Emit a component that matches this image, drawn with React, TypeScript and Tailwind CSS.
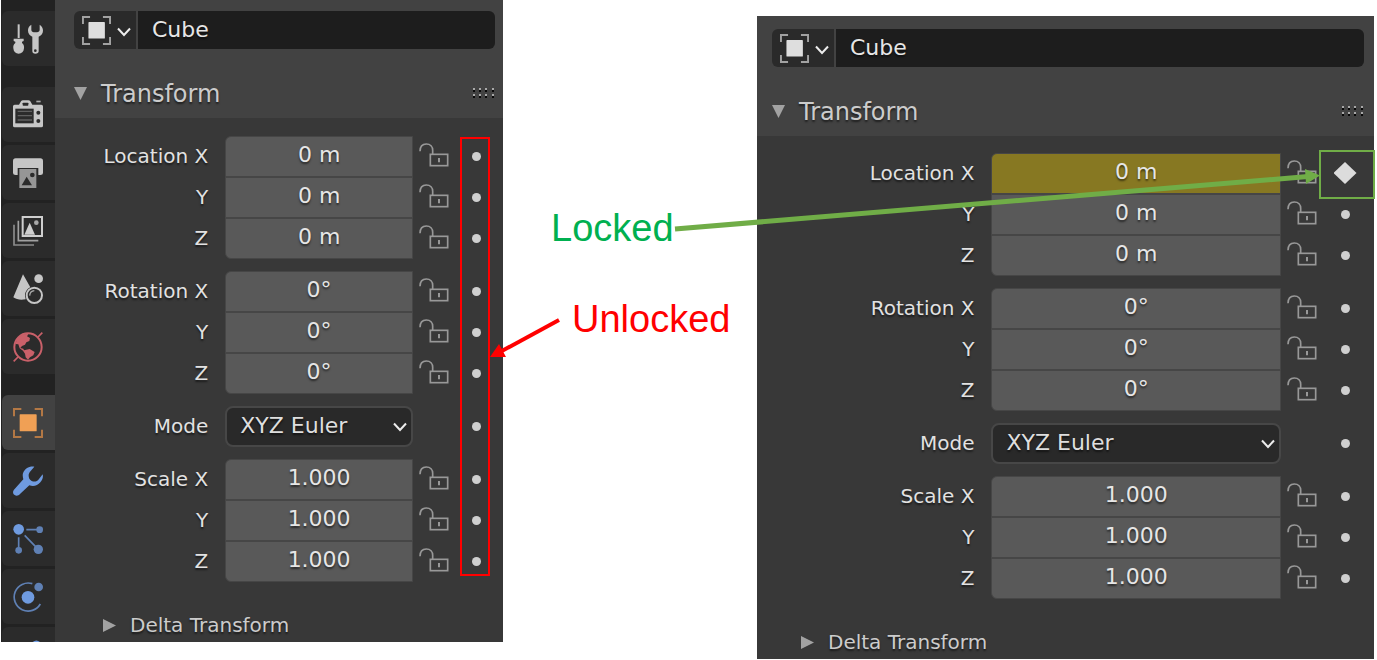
import React, { useState } from "react";

const textShadow = "[text-shadow:0_2px_2px_rgba(0,0,0,0.55)]";

function BracketIcon({ outer, inner, className }: { outer: string; inner: string; className: string }) {
  return (
    <svg viewBox="0 0 90 90" className={className} fill="none" aria-hidden="true">
      <path
        d="M3 25V3H25M65 3H87V25M87 65V87H65M25 87H3V65"
        stroke={outer}
        strokeWidth="6"
      />
      <rect x="20" y="19" width="51" height="51" rx="2" fill={inner} />
    </svg>
  );
}

function Chevron({ className }: { className: string }) {
  return (
    <svg viewBox="0 0 14 10" className={className} fill="none" aria-hidden="true">
      <path d="M1 1.5L7 8L13 1.5" stroke="#ececec" strokeWidth="2" />
    </svg>
  );
}

function LockIcon() {
  return (
    <svg viewBox="0 0 90 72" className="h-6 w-[30px]" fill="none" stroke="#989898" strokeWidth="5" aria-hidden="true">
      <path d="M3 25C3 10 11 3 22 3C34 3 41 11 41 22V33" />
      <rect x="34" y="34" width="52" height="34" />
      <path d="M60 45V58" strokeWidth="6" />
    </svg>
  );
}

function GripIcon() {
  return (
    <svg viewBox="0 0 24 12" className="h-3 w-6" aria-hidden="true">
      {[2, 8, 14, 21].map((x) => (
        <g key={x}>
          <rect x={x} y="0" width="2" height="2" fill="#a8a8a8" />
          <rect x={x} y="2" width="2" height="2" fill="#080808" />
          <rect x={x} y="6" width="2" height="2" fill="#a8a8a8" />
          <rect x={x} y="8" width="2" height="2" fill="#080808" />
        </g>
      ))}
    </svg>
  );
}

const tabIcon = "h-[30px] w-[30px]";

const ToolIcon = () => (
  <svg viewBox="0 0 90 90" className={tabIcon} fill="#c6c6c6" aria-hidden="true">
    <rect x="14" y="1" width="6" height="41" />
    <path d="M2 44H32V51L27 53V57C32 61 34 66 33 73C32 84 26 89 17 89C8 89 2 84 1 73C0 66 2 61 7 57V53L2 51Z" />
    <path d="M55 2C47 7 45 13 45 20C45 29 51 34 58 38V82Q58 89 67 89Q77 89 77 82V38C84 34 90 29 90 20C90 13 87 7 80 2V17Q80 25 67 25Q55 25 55 17Z" />
    <circle cx="67" cy="80" r="4" fill="#2b2b2b" />
  </svg>
);

const RenderIcon = () => (
  <svg viewBox="0 0 90 90" className={tabIcon} aria-hidden="true">
    <path
      d="M5 14H18L24 4Q26 1 30 1H46Q50 1 52 4L58 14H85Q90 14 90 19V77Q90 82 85 82H5Q0 82 0 77V19Q0 14 5 14Z"
      fill="#c6c6c6"
    />
    <rect x="29" y="8" width="17" height="9" rx="2" fill="#2b2b2b" />
    <rect x="70" y="2" width="13" height="5" fill="#aaaaaa" />
    <rect x="7" y="26" width="55" height="44" fill="#2b2b2b" />
    <path d="M14 34H57M14 47H57M14 60H57" stroke="#606060" strokeWidth="4" />
    <circle cx="76" cy="38" r="6" fill="#2b2b2b" />
    <circle cx="76" cy="63" r="6" fill="#2b2b2b" />
  </svg>
);

const OutputIcon = () => (
  <svg viewBox="0 0 90 90" className={tabIcon} aria-hidden="true">
    <path d="M8 1H82Q90 1 90 9V45Q90 51 82 51H76V30H14V51H8Q0 51 0 45V9Q0 1 8 1Z" fill="#c6c6c6" />
    <rect x="19" y="33" width="51" height="57" fill="#969696" />
    <path d="M26 82L41 56L57 82Z" fill="#2b2b2b" />
    <circle cx="58" cy="51" r="7" fill="#2b2b2b" />
  </svg>
);

const ViewLayerIcon = () => (
  <svg viewBox="0 0 90 90" className={tabIcon} fill="none" aria-hidden="true">
    <path d="M3 26V87H63" stroke="#8c8c8c" strokeWidth="5" />
    <path d="M16 14V74H76" stroke="#a0a0a0" strokeWidth="5" />
    <rect x="29" y="3" width="58" height="57" stroke="#cfcfcf" strokeWidth="6" />
    <path d="M34 56L50 20L66 56Z" fill="#cfcfcf" />
    <circle cx="70" cy="20" r="7" fill="#a8a8a8" />
  </svg>
);

const SceneIcon = () => (
  <svg viewBox="0 0 90 90" className={tabIcon} aria-hidden="true">
    <path d="M30 1L52 40C40 46 34 58 37 70L38 76C24 79 10 77 1 70Z" fill="#c6c6c6" />
    <circle cx="77" cy="14" r="13" fill="#c6c6c6" />
    <circle cx="64" cy="64" r="23" fill="none" stroke="#c6c6c6" strokeWidth="6" />
    <path d="M50 65Q51 51 64 50" fill="none" stroke="#aaaaaa" strokeWidth="4" />
  </svg>
);

const WorldIcon = () => (
  <svg viewBox="0 0 90 90" className={tabIcon} fill="none" aria-hidden="true">
    <circle cx="45" cy="45" r="41" stroke="#c96069" strokeWidth="6" />
    <path d="M2 88L15 75M75 15L88 2" stroke="#c96069" strokeWidth="5" />
    <path
      d="M12 22C20 10 34 4 46 7L42 13L51 18L49 27L40 31L36 38L27 42L22 48L31 50L33 55L50 51L65 60L61 70L51 76L45 83L38 76L36 65L30 56L20 49L16 37L7 36Z"
      fill="#c96069"
    />
  </svg>
);

const ModifierIcon = () => (
  <svg viewBox="0 0 90 90" className={tabIcon} fill="#6f9be0" aria-hidden="true">
    <path d="M64 2C48 0 35 8 30 22C28 29 30 35 31 40L3 71C-2 77 0 84 5 87C10 91 17 89 21 84L49 58C61 63 74 59 82 49C89 41 91 33 89 25L75 43C67 50 55 47 49 38C45 29 47 21 53 15Z" />
  </svg>
);

const ParticlesIcon = () => (
  <svg viewBox="0 0 90 90" className={tabIcon} aria-hidden="true">
    <path d="M40 17H72M17 40V72M35 34L70 70" stroke="#5f80b4" strokeWidth="5" />
    <circle cx="17" cy="16" r="16" fill="#6f9be0" />
    <circle cx="80" cy="17" r="10" fill="#5f80b4" />
    <circle cx="17" cy="79" r="10" fill="#5f80b4" />
    <circle cx="76" cy="76" r="14" fill="#5f80b4" />
  </svg>
);

const PhysicsIcon = () => (
  <svg viewBox="0 0 90 90" className={tabIcon} aria-hidden="true">
    <path d="M58 5A42 42 0 1 0 82 66" fill="none" stroke="#5f80b4" strokeWidth="5" />
    <circle cx="45" cy="46" r="19" fill="#6f9be0" />
    <circle cx="77" cy="15" r="13" fill="#5f80b4" />
  </svg>
);

const ConstraintIcon = () => (
  <svg viewBox="0 0 90 6" className="h-[2px] w-[30px]" aria-hidden="true">
    <path d="M59 6Q70 -3 81 6Z" fill="#6f9be0" />
  </svg>
);

function Tab({ label, active, children }: { label: string; active?: boolean; children: React.ReactNode }) {
  return (
    <button
      type="button"
      aria-label={label}
      className={`flex h-[55px] items-center justify-center rounded-l-md pr-px ${active ? "bg-[#424242]" : "bg-[#2b2b2b]"}`}
    >
      {children}
    </button>
  );
}

function Sidebar() {
  return (
    <nav aria-label="Property tabs" className="flex w-[54px] shrink-0 flex-col gap-[21px] bg-[#222222] pt-[11px] pl-px">
      <Tab label="Tool"><ToolIcon /></Tab>
      <div className="flex flex-col gap-[3px]">
        <Tab label="Render"><RenderIcon /></Tab>
        <Tab label="Output"><OutputIcon /></Tab>
        <Tab label="View Layer"><ViewLayerIcon /></Tab>
        <Tab label="Scene"><SceneIcon /></Tab>
        <Tab label="World"><WorldIcon /></Tab>
      </div>
      <div className="flex grow flex-col gap-[3px]">
        <Tab label="Object" active>
          <BracketIcon outer="#b37845" inner="#f0a055" className={tabIcon} />
        </Tab>
        <Tab label="Modifiers"><ModifierIcon /></Tab>
        <Tab label="Particles"><ParticlesIcon /></Tab>
        <Tab label="Physics"><PhysicsIcon /></Tab>
        <button
          type="button"
          aria-label="Constraints"
          className="flex grow items-end justify-center rounded-tl-md bg-[#2b2b2b] pr-px"
        >
          <ConstraintIcon />
        </button>
      </div>
    </nav>
  );
}

const labelText = `pr-[17px] pb-[2px] text-right text-[20px] leading-6 text-[#e2e2e2] ${textShadow}`;

function KeyButton({ name, keyed }: { name: string; keyed?: boolean }) {
  return (
    <button type="button" aria-label={`Keyframe ${name}`} className="flex h-6 w-6 items-center justify-center justify-self-center">
      {keyed ? (
        <svg viewBox="0 0 24 24" className="h-6 w-6" aria-hidden="true">
          <path d="M11 0L22.500 11L11 22L-0.500 11Z" fill="#dcdcdc" />
        </svg>
      ) : (
        <span className="h-[9px] w-[9px] rounded-full bg-[#cfcfcf]" />
      )}
    </button>
  );
}

interface RowProps {
  id: string;
  label: string;
  value: string;
  corner: string;
  columns: string;
  keyed?: boolean;
}

function NumberRow({ id, label, value, corner, columns, keyed }: RowProps) {
  return (
    <div className={`grid h-[41px] items-center ${columns}`}>
      <label htmlFor={id} className={labelText}>{label}</label>
      <input
        id={id}
        type="text"
        defaultValue={value}
        className={`h-full w-full border border-[#464646] pb-1 text-center text-[22px] text-[#e6e6e6] outline-none ${textShadow} ${corner} ${keyed ? "bg-[#877822]" : "bg-[#595959]"}`}
      />
      <button type="button" aria-label={`Lock ${id}`} className="pb-[3px] pl-[6px]">
        <LockIcon />
      </button>
      <KeyButton name={id} keyed={keyed} />
    </div>
  );
}

interface GroupProps {
  panel: string;
  name: string;
  value: string;
  columns: string;
  keyedX?: boolean;
}

function VectorGroup({ panel, name, value, columns, keyedX }: GroupProps) {
  return (
    <div>
      <NumberRow id={`${panel}-${name}-x`} label={`${name} X`} value={value} corner="rounded-tl-md" columns={columns} keyed={keyedX} />
      <NumberRow id={`${panel}-${name}-y`} label="Y" value={value} corner="rounded-none" columns={columns} />
      <NumberRow id={`${panel}-${name}-z`} label="Z" value={value} corner="rounded-bl-md" columns={columns} />
    </div>
  );
}

interface PanelProps {
  id: string;
  inset: string;
  deltaInset: string;
  top: string;
  bodyTop: string;
  columns: string;
  keyedX?: boolean;
  highlight: React.ReactNode;
}

function TransformPanel({ id, inset, deltaInset, top, bodyTop, columns, keyedX, highlight }: PanelProps) {
  const [name, setName] = useState("Cube");
  return (
    <section className="min-w-0 grow bg-[#383838]">
      <div className={`bg-[#424242] pb-[10px] ${inset} ${top}`}>
        <div className="flex h-[38px] gap-[2px] overflow-hidden rounded-md bg-[#424242]">
          <button type="button" aria-label="Browse object" className="flex w-[62px] shrink-0 items-center gap-[6px] bg-[#2a2a2a] pl-2">
            <BracketIcon outer="#a2a2a2" inner="#dedede" className="h-[29px] w-[29px]" />
            <Chevron className="mt-1 h-[10px] w-[14px]" />
          </button>
          <input
            type="text"
            aria-label="Object name"
            value={name}
            onChange={(e) => setName(e.target.value)}
            className={`min-w-0 grow bg-[#1d1d1d] pb-[2px] pl-[14px] text-[22px] text-[#e6e6e6] outline-none ${textShadow}`}
          />
        </div>
        <div className="mt-[30px] flex h-[29px] items-center justify-between">
          <button type="button" className={`flex items-center gap-[14px] text-[24px] leading-7 text-[#cccccc] ${textShadow}`}>
            <svg viewBox="0 0 13 13" className="h-[13px] w-[13px]" aria-hidden="true">
              <path d="M0 0H13L6.5 13Z" fill="#a2a2a2" />
            </svg>
            Transform
          </button>
          <GripIcon />
        </div>
      </div>
      <div className={bodyTop}>
        <div className="relative flex flex-col gap-3">
          <VectorGroup panel={id} name="Location" value="0 m" columns={columns} keyedX={keyedX} />
          <VectorGroup panel={id} name="Rotation" value="0°" columns={columns} />
          <div className={`grid h-[41px] items-center ${columns}`}>
            <label htmlFor={`${id}-mode`} className={labelText}>Mode</label>
            <div className="relative h-full">
              <select
                id={`${id}-mode`}
                className={`h-full w-full appearance-none rounded-lg border-2 border-[#474747] bg-[#292929] pb-[2px] pl-[13px] text-[22px] text-[#dedede] outline-none ${textShadow}`}
              >
                <option>XYZ Euler</option>
              </select>
              <Chevron className="pointer-events-none absolute top-4 right-[6px] h-[10px] w-[14px]" />
            </div>
            <span />
            <KeyButton name={`${id}-mode`} />
          </div>
          <VectorGroup panel={id} name="Scale" value="1.000" columns={columns} />
          {highlight}
        </div>
        <button
          type="button"
          className={`mt-[31px] mb-[5px] flex h-6 items-center gap-[14px] text-[20px] leading-6 text-[#cccccc] ${deltaInset} ${textShadow}`}
        >
          <svg viewBox="0 0 13 13" className="h-[13px] w-[13px]" aria-hidden="true">
            <path d="M0 0V13L13 6.5Z" fill="#a2a2a2" />
          </svg>
          Delta Transform
        </button>
      </div>
    </section>
  );
}

function Arrows() {
  return (
    <svg
      viewBox="0 0 1377 660"
      preserveAspectRatio="none"
      className="pointer-events-none absolute top-0 left-0 h-[660px] w-full"
      aria-hidden="true"
    >
      <path d="M675 229L1308 176.500" stroke="#70ad47" strokeWidth="5" />
      <path d="M1305 169L1320 175.500L1306 184Z" fill="#70ad47" />
      <path d="M559 320L500 352" stroke="#ff0000" strokeWidth="4" />
      <path d="M490 357L499 344L506 357Z" fill="#ff0000" />
    </svg>
  );
}

export default function App() {
  return (
    <main className="relative grid grid-cols-[502fr_254fr_617fr] items-start bg-white pr-[3px] pl-px font-['DejaVu_Sans',sans-serif]">
      <div className="flex min-w-0">
        <Sidebar />
        <TransformPanel
          id="unlocked"
          inset="pl-[19px] pr-2"
          deltaInset="pl-12"
          top="pt-[11px]"
          bodyTop="pt-[18px]"
          columns="grid-cols-[38%_minmax(0,1fr)_36px_54px]"
          highlight={
            <div className="pointer-events-none absolute top-px right-[13px] bottom-[6px] w-[30px] border-2 border-[#ff0000]" />
          }
        />
      </div>
      <div className="flex flex-col gap-[47px] pt-[206px] font-['Liberation_Sans',Arial,sans-serif] text-[38px] leading-[44px] whitespace-nowrap">
        <p className="pl-12 text-[#00b050]">Locked</p>
        <p className="pl-[69px] text-[#ff0000]">Unlocked</p>
      </div>
      <div className="mt-4 flex min-w-0">
        <TransformPanel
          id="locked"
          inset="pl-[15px] pr-[10px]"
          deltaInset="pl-11"
          top="pt-[13px]"
          bodyTop="pt-[17px]"
          columns="grid-cols-[38%_minmax(0,1fr)_36px_57px]"
          keyedX
          highlight={
            <div className="pointer-events-none absolute -top-[3px] -right-px h-[49px] w-[56px] border-2 border-[#70ad47]" />
          }
        />
      </div>
      <Arrows />
    </main>
  );
}
